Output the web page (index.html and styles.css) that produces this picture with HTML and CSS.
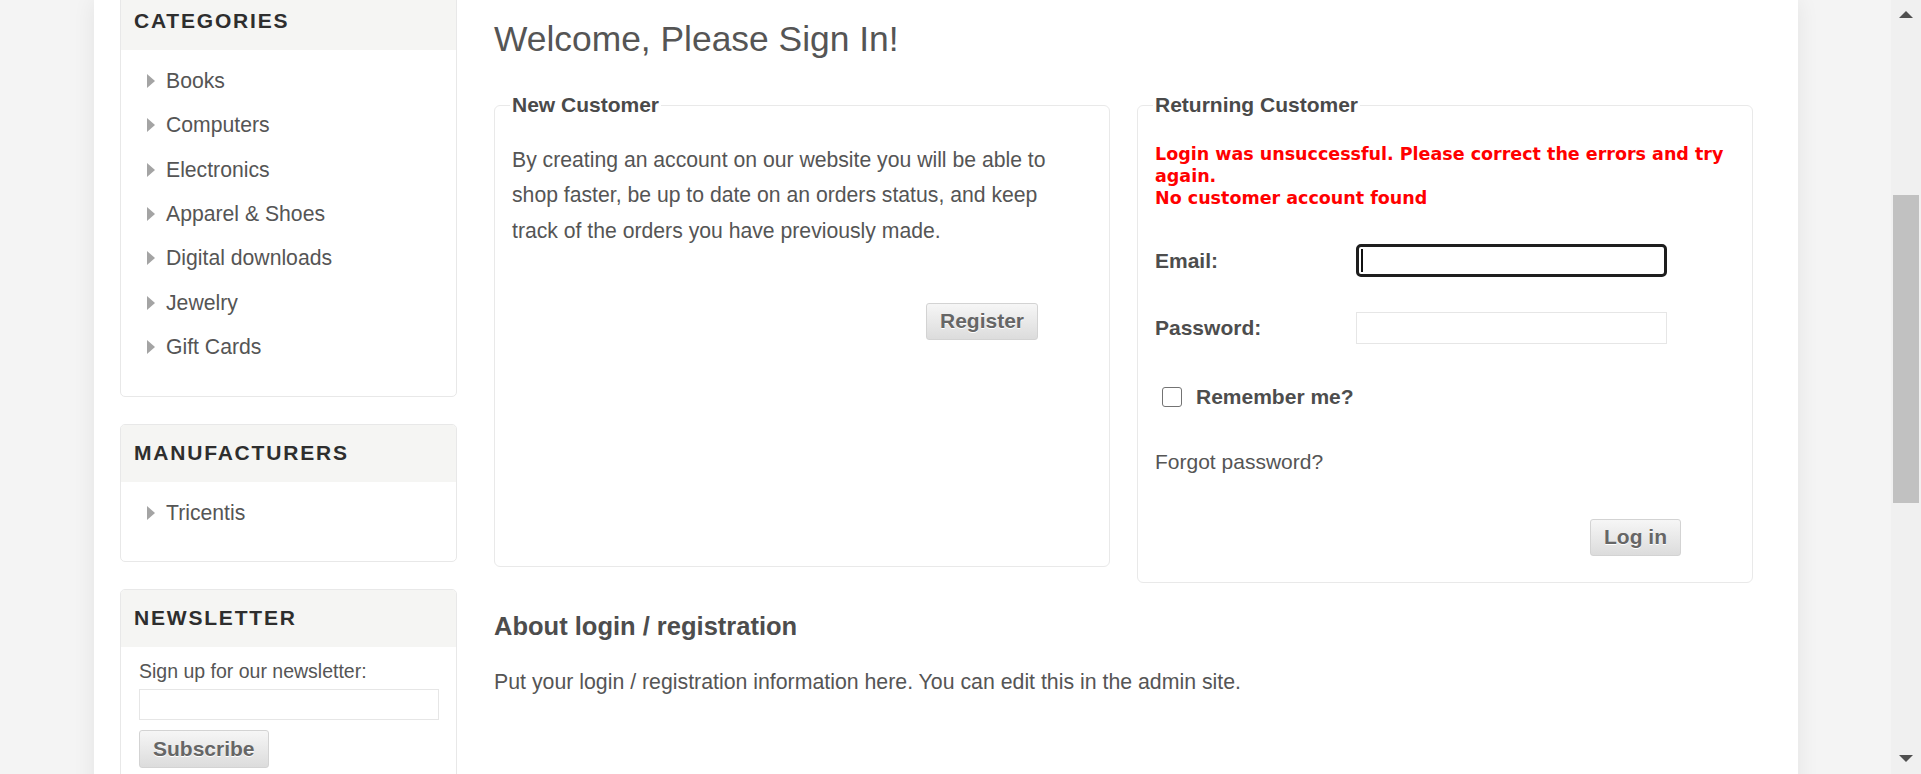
FILE: index.html
```html
<!DOCTYPE html>
<html lang="en">
<head>
<meta charset="utf-8">
<title>Login</title>
<link rel="stylesheet" href="styles.css">
</head>
<body>
<div class="page">
  <div class="master">
    <aside class="side">
      <div class="block">
        <div class="block-title">Categories</div>
        <ul class="list">
          <li>Books</li>
          <li>Computers</li>
          <li>Electronics</li>
          <li>Apparel &amp; Shoes</li>
          <li>Digital downloads</li>
          <li>Jewelry</li>
          <li>Gift Cards</li>
        </ul>
      </div>
      <div class="block">
        <div class="block-title">Manufacturers</div>
        <ul class="list">
          <li>Tricentis</li>
        </ul>
      </div>
      <div class="block">
        <div class="block-title">Newsletter</div>
        <div class="news">
          <div class="news-label">Sign up for our newsletter:</div>
          <input class="news-input" type="text">
          <button class="btn btn-sub" type="button">Subscribe</button>
        </div>
      </div>
    </aside>
    <main class="main">
      <h1 class="page-title">Welcome, Please Sign In!</h1>
      <div class="customers">
        <fieldset class="box box-new">
          <legend>New Customer</legend>
          <p class="intro">By creating an account on our website you will be able to shop faster, be up to date on an orders status, and keep track of the orders you have previously made.</p>
          <div class="actions actions-new">
            <button class="btn" type="button">Register</button>
          </div>
        </fieldset>
        <fieldset class="box box-ret">
          <legend>Returning Customer</legend>
          <div class="errors">
            <div>Login was unsuccessful. Please correct the errors and try again.</div>
            <div>No customer account found</div>
          </div>
          <div class="field field-email">
            <label>Email:</label>
            <span class="caret-wrap"><input class="input input-focus" type="text"><span class="caret"></span></span>
          </div>
          <div class="field field-pass">
            <label>Password:</label>
            <input class="input" type="password">
          </div>
          <div class="remember">
            <input class="check" type="checkbox">
            <span class="remember-label">Remember me?</span>
          </div>
          <div class="forgot">Forgot password?</div>
          <div class="actions actions-ret">
            <button class="btn" type="button">Log in</button>
          </div>
        </fieldset>
      </div>
      <h2 class="about-title">About login / registration</h2>
      <p class="about-text">Put your login / registration information here. You can edit this in the admin site.</p>
    </main>
  </div>
</div>
<div class="scrollbar">
  <span class="sb-up"></span>
  <span class="sb-thumb"></span>
  <span class="sb-down"></span>
</div>
</body>
</html>
```
FILE: styles.css
```css
* { box-sizing: border-box; }

html, body {
  margin: 0;
  padding: 0;
  overflow: hidden;
}

body {
  background: #f4f4f4;
  font-family: "Liberation Sans", Arial, sans-serif;
  color: #555;
  width: 1921px;
  height: 774px;
}

.page {
  width: 1891px;
}

.master {
  width: 1704px;
  margin-left: 94px;
  background: #fff;
  box-shadow: 0 0 22px rgba(0, 0, 0, 0.07);
  display: flex;
  align-items: flex-start;
  padding-left: 26px;
  padding-bottom: 60px;
  min-height: 900px;
}

/* ---------- sidebar ---------- */
.side {
  width: 337px;
  flex: none;
  margin-top: -8px;
  display: flex;
  flex-direction: column;
  gap: 27px;
}

.block {
  border: 1px solid #e8e8e8;
  border-radius: 5px;
  overflow: hidden;
  background: #fff;
}

.block-title {
  background: #f5f5f3;
  padding: 16px 13px 17px;
  font-size: 21px;
  line-height: 24px;
  font-weight: bold;
  letter-spacing: 1.8px;
  text-transform: uppercase;
  color: #2e2e2e;
}

.list {
  list-style: none;
  margin: 0;
  padding: 9px 0 26.5px 26px;
}

.list li {
  display: flex;
  align-items: center;
  height: 44.3px;
  font-size: 21.2px;
  color: #555;
}

.list li::before {
  content: "";
  width: 0;
  height: 0;
  border-left: 8px solid #a4a4a4;
  border-top: 7px solid transparent;
  border-bottom: 7px solid transparent;
  margin-right: 11px;
}

.news {
  padding: 13px 18px 40px;
}

.news-label {
  font-size: 19.5px;
  line-height: 22.4px;
  color: #555;
}

.news-input {
  display: block;
  width: 300px;
  height: 31px;
  margin: 6px 0 10px;
  border: 1px solid #e6e6e6;
  background: #fff;
}

/* ---------- buttons ---------- */
.btn {
  height: 37px;
  padding: 0 13px;
  border: 1px solid #d3d3d3;
  border-radius: 3px;
  background: linear-gradient(#f6f6f6, #dcdcdc);
  font-family: "Liberation Sans", Arial, sans-serif;
  font-weight: bold;
  font-size: 21px;
  color: #666;
  text-shadow: 0 1px 0 #fff;
}

.btn-sub {
  height: 38px;
  padding: 0 13px;
}

/* ---------- main ---------- */
.main {
  width: 1259px;
  flex: none;
  margin-left: 37px;
  padding-top: 19px;
}

.page-title {
  margin: 0 0 34px;
  font-size: 35.4px;
  line-height: 40px;
  font-weight: normal;
  color: #555;
}

.customers {
  display: flex;
  gap: 27px;
  align-items: flex-start;
}

.box {
  width: 616px;
  margin: 0;
  border: 1px solid #e9e9e9;
  border-radius: 6px;
  padding: 0 17px;
  min-width: 0;
}

.box legend {
  padding: 0 2px;
  margin-left: -2px;
  font-size: 21px;
  line-height: 24px;
  font-weight: bold;
  color: #4a4a4a;
}

.box-new {
  height: 474px;
}

.box-ret {
  padding-bottom: 26px;
}

.intro {
  margin: 25px 0 0;
  font-size: 21.2px;
  line-height: 35.3px;
  max-width: 560px;
}

.actions {
  display: flex;
  justify-content: flex-end;
  padding-right: 54px;
}

.actions-new {
  margin-top: 55px;
}

.actions-ret {
  margin-top: 44.7px;
}

.errors {
  margin-top: 27.3px;
  font-family: "DejaVu Sans", sans-serif;
  font-weight: bold;
  font-size: 17.5px;
  line-height: 21.7px;
  color: #ff0000;
}

.field {
  display: flex;
  align-items: center;
}

.field label {
  width: 201px;
  flex: none;
  font-weight: bold;
  font-size: 21px;
  color: #4d4d4d;
}

.field-email {
  margin-top: 34.6px;
  height: 33px;
}

.field-pass {
  margin-top: 35px;
  height: 32px;
}

.input {
  display: block;
  width: 311px;
  height: 32px;
  margin: 0;
  border: 1px solid #e6e6e6;
  background: #fff;
}

.input-focus {
  height: 33px;
  border: 3px solid #1e1e1e;
  border-radius: 5px;
  outline: none;
}

.caret-wrap {
  position: relative;
  display: block;
}

.caret {
  position: absolute;
  left: 5px;
  top: 5px;
  width: 2px;
  height: 23px;
  background: #111;
}

.remember {
  margin-top: 43px;
  display: flex;
  align-items: center;
  padding-left: 7px;
  height: 20px;
}

.check {
  appearance: none;
  -webkit-appearance: none;
  width: 20px;
  height: 20px;
  margin: 0;
  border: 1.5px solid #737373;
  border-radius: 3px;
  background: #fff;
}

.remember-label {
  margin-left: 14px;
  font-weight: bold;
  font-size: 21px;
  color: #4d4d4d;
}

.forgot {
  margin-top: 43.3px;
  font-size: 21px;
  line-height: 24px;
}

.about-title {
  margin: 28px 0 0;
  font-size: 25.5px;
  line-height: 30px;
  font-weight: bold;
  color: #4d4d4d;
}

.about-text {
  margin: 28.7px 0 0;
  font-size: 21.3px;
  line-height: 24px;
}

/* ---------- fake scrollbar (overlay) ---------- */
.scrollbar {
  position: fixed;
  top: 0;
  right: 0;
  width: 30px;
  height: 774px;
  background: #f0f0f0;
}

.sb-up {
  position: absolute;
  top: 11px;
  left: 8px;
  width: 0;
  height: 0;
  border-bottom: 7px solid #505050;
  border-left: 7px solid transparent;
  border-right: 7px solid transparent;
}

.sb-thumb {
  position: absolute;
  top: 195px;
  left: 2px;
  width: 26px;
  height: 308px;
  background: #c1c1c1;
}

.sb-down {
  position: absolute;
  bottom: 12px;
  left: 8px;
  width: 0;
  height: 0;
  border-top: 7px solid #505050;
  border-left: 7px solid transparent;
  border-right: 7px solid transparent;
}
```
